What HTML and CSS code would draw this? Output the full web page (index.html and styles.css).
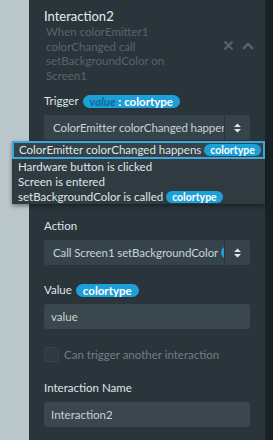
FILE: index.html
```html
<!DOCTYPE html>
<html lang="en">
<head>
  <meta charset="UTF-8">
  <title>Interaction</title>
  <link rel="stylesheet" href="styles.css">
</head>
<body>
  <div class="side-left"></div>
  <div class="panel">
    <div class="head">
      <div class="head-text">
        <div class="title">Interaction2</div>
        <div class="desc">When colorEmitter1 colorChanged call setBackgroundColor on Screen1</div>
      </div>
      <div class="head-icons">
        <svg width="11" height="11" viewBox="0 0 11 11"><path d="M1.5 1.5 L9.5 9.5 M9.5 1.5 L1.5 9.5" stroke="#56656b" stroke-width="2.2" fill="none"/></svg>
        <svg width="12" height="8" viewBox="0 0 12 8"><path d="M1 7 L6 2 L11 7" stroke="#56656b" stroke-width="2.4" fill="none"/></svg>
      </div>
    </div>

    <div class="label trigger">Trigger <span class="badge"><i>value</i> : colortype</span></div>
    <div class="select">
      <div class="select-text">ColorEmitter colorChanged happens</div>
      <div class="select-arrow">
        <svg width="9" height="12" viewBox="0 0 9 12"><path d="M1 5 L4.5 1.5 L8 5 Z M1 7 L4.5 10.5 L8 7 Z" fill="#dfe6e8"/></svg>
      </div>
    </div>

    <div class="label action">Action</div>
    <div class="select">
      <div class="select-text">Call Screen1 setBackgroundColor <span class="badge">colortype</span></div>
      <div class="select-arrow">
        <svg width="9" height="12" viewBox="0 0 9 12"><path d="M1 5 L4.5 1.5 L8 5 Z M1 7 L4.5 10.5 L8 7 Z" fill="#dfe6e8"/></svg>
      </div>
    </div>

    <div class="label value">Value <span class="badge">colortype</span></div>
    <div class="input">value</div>

    <label class="check"><span class="box"></span>Can trigger another interaction</label>

    <div class="label name">Interaction Name</div>
    <div class="input">Interaction2</div>
  </div>
  <div class="side-right"></div>

  <ul class="menu">
    <li class="active">ColorEmitter colorChanged happens <span class="badge">colortype</span></li>
    <li>Hardware button is clicked</li>
    <li>Screen is entered</li>
    <li>setBackgroundColor is called <span class="badge">colortype</span></li>
  </ul>
</body>
</html>
```

FILE: styles.css
```css
body {
  margin: 0;
  height: 440px;
  display: flex;
  font-family: Lato, sans-serif;
  font-size: 11.5px;
  color: #dfe6e8;
  background: #b9c6ca;
  overflow: hidden;
}

.side-left {
  width: 29px;
  flex-shrink: 0;
  background: #b9c6ca;
}

.panel {
  flex: 1;
  min-width: 0;
  background: #29353b;
  padding: 8px 15px 0 15px;
  display: flex;
  flex-direction: column;
}

.side-right {
  width: 8px;
  flex-shrink: 0;
  background: #172126;
}

.head {
  display: flex;
  align-items: center;
}

.head-text {
  flex: 1;
}

.title {
  font-size: 13px;
  line-height: 17px;
  color: #e6ecee;
}

.desc {
  color: #56656b;
  font-size: 11.5px;
  line-height: 14.5px;
  padding-left: 2px;
  width: 125px;
}

.head-icons {
  display: flex;
  align-items: center;
  gap: 8px;
  margin-right: -4px;
}

.label {
  line-height: 16px;
  margin-bottom: 6px;
  display: flex;
  align-items: center;
  gap: 4px;
}

.trigger {
  margin-top: 10px;
}

.action {
  margin-top: 78px;
}

.value {
  margin-top: 17px;
}

.name {
  margin-top: 18px;
}

.badge {
  display: inline-block;
  background: #1d9fd8;
  color: #fff;
  font-weight: bold;
  font-size: 11.5px;
  line-height: 13px;
  padding: 0 7px;
  border-radius: 7px;
}

.badge i {
  color: #0f6a98;
}

.select {
  height: 25px;
  display: flex;
  background: #36434a;
  border-radius: 2px;
}

.select-text {
  flex: 1;
  min-width: 0;
  padding-left: 9px;
  line-height: 25px;
  white-space: nowrap;
  overflow: hidden;
  color: #c9d3d6;
  letter-spacing: -0.1px;
}

.select-arrow {
  width: 25px;
  flex-shrink: 0;
  border-left: 1px solid #29353b;
  display: flex;
  align-items: center;
  justify-content: center;
}

.input {
  height: 25px;
  line-height: 25px;
  padding-left: 7px;
  background: #3a474e;
  border-radius: 3px;
  color: #c9d3d6;
}

.check {
  margin-top: 18px;
  display: flex;
  align-items: center;
  gap: 5px;
  color: #6f7e84;
}

.check .box {
  width: 13px;
  height: 13px;
  border: 1px solid #36434a;
  border-radius: 3px;
  background: #2d3a40;
}

.menu {
  position: absolute;
  left: 12px;
  top: 141px;
  width: 253px;
  margin: 0;
  padding: 0;
  list-style: none;
  background: #2f3b41;
  box-shadow: 0 2px 4px rgba(0, 0, 0, 0.4);
}

.menu li {
  line-height: 15px;
  padding: 0 6px;
  white-space: nowrap;
}

.menu li.active {
  border: 2px solid #3aa7d8;
  line-height: 14px;
  padding: 0 5px;
  background: #354249;
}

.menu .badge {
  font-size: 10.5px;
  line-height: 12px;
  padding: 0 6px;
}
```
